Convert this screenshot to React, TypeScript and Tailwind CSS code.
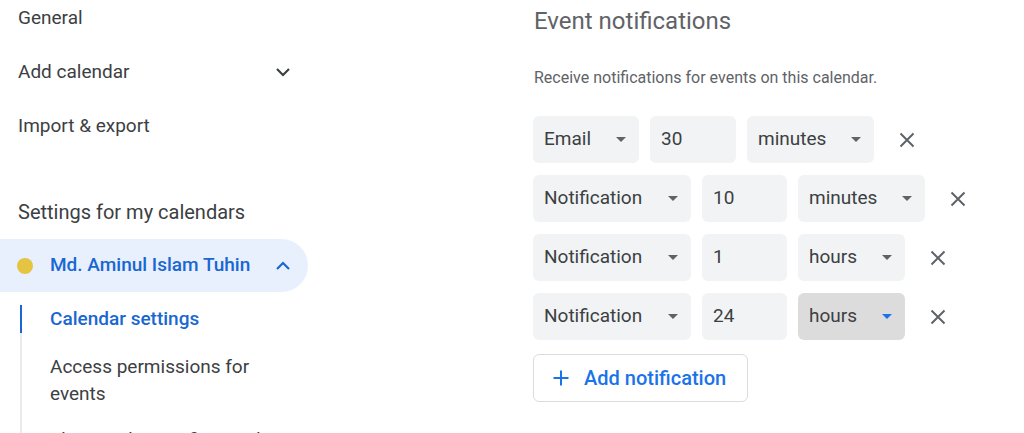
import React from "react";

const Caret = ({ active = false }: { active?: boolean }) => (
  <svg width="10" height="5" viewBox="0 0 10 5" className="shrink-0">
    <path d="M0 0 L10 0 L5 5 Z" fill={active ? "#1a73e8" : "#5f6368"} />
  </svg>
);

const XIcon = () => (
  <svg width="16" height="16" viewBox="0 0 16 16">
    <path d="M1.5 1.5 L14.5 14.5 M14.5 1.5 L1.5 14.5" stroke="#5f6368" strokeWidth="2" fill="none" />
  </svg>
);

const Select = ({ label, width, active = false }: { label: string; width: string; active?: boolean }) => (
  <div
    className={`${width} ${active ? "bg-[#dcdcdd]" : "bg-[#f1f3f4]"} h-[47px] rounded-[6px] flex items-center justify-between pl-[11px] pr-[13px] text-[19px] text-[#3c4043]`}
  >
    <span>{label}</span>
    <Caret active={active} />
  </div>
);

const NumBox = ({ value, width }: { value: string; width: string }) => (
  <div className={`${width} bg-[#f1f3f4] h-[47px] rounded-[6px] flex items-center pl-[11px] text-[19px] text-[#3c4043]`}>
    {value}
  </div>
);

const Row = ({
  type,
  typeW,
  num,
  numW,
  unit,
  unitW,
  active = false,
}: {
  type: string;
  typeW: string;
  num: string;
  numW: string;
  unit: string;
  unitW: string;
  active?: boolean;
}) => (
  <div className="flex items-center gap-[11px] shrink-0">
    <Select label={type} width={typeW} />
    <NumBox value={num} width={numW} />
    <Select label={unit} width={unitW} active={active} />
    <div className="w-[44px] h-[44px] flex items-center justify-center">
      <XIcon />
    </div>
  </div>
);

export default function App() {
  return (
    <div
      className="w-[1024px] h-[433px] overflow-hidden bg-white flex"
      style={{ fontFamily: "Roboto, 'Noto Sans', sans-serif" }}
    >
      {/* Left navigation */}
      <div className="w-[533px] shrink-0 flex flex-col text-[19px] text-[#3c4043]">
        <div className="shrink-0 h-[36px] flex items-center pl-[18px]">General</div>
        <div className="shrink-0 mt-[9px] h-[54px] flex items-center justify-between pl-[18px] pr-[242px]">
          <span>Add calendar</span>
          <svg width="16" height="10" viewBox="0 0 16 10">
            <path d="M2 2 L8 8 L14 2" stroke="#3c4043" strokeWidth="2.2" fill="none" />
          </svg>
        </div>
        <div className="shrink-0 h-[54px] flex items-center pl-[18px]">Import &amp; export</div>
        <div className="shrink-0 mt-[32px] h-[54px] flex items-center pl-[18px] text-[20px] text-[#3c4043]">
          Settings for my calendars
        </div>
        <div className="shrink-0 w-[308px] h-[53px] bg-[#e8f0fe] rounded-r-full flex items-center pl-[17px] pr-[17px]">
          <div className="w-[16px] h-[16px] rounded-full bg-[#e4c441] shrink-0" />
          <span className="ml-[17px] text-[#1967d2] font-medium flex-1 whitespace-nowrap">Md. Aminul Islam Tuhin</span>
          <svg width="16" height="10" viewBox="0 0 16 10" className="shrink-0">
            <path d="M2 8 L8 2 L14 8" stroke="#1967d2" strokeWidth="2.2" fill="none" />
          </svg>
        </div>
        <div className="shrink-0 ml-[20px] flex flex-col">
          <div className="shrink-0 mt-[13px] h-[28px] flex items-center">
            <div className="w-[2px] h-full bg-[#1967d2]" />
            <span className="ml-[28px] text-[#1967d2] font-medium">Calendar settings</span>
          </div>
          <div className="shrink-0 border-l-2 border-[#e8eaed] pl-[28px] pt-[20px] flex flex-col leading-[27px]">
            <div className="w-[230px]">Access permissions for events</div>
            <div className="mt-[19px] whitespace-nowrap">Share with specific people</div>
          </div>
        </div>
      </div>

      {/* Right content */}
      <div className="flex flex-col">
        <div className="shrink-0 h-[42px] flex items-center text-[24px] text-[#5f6368] pl-[1px]">Event notifications</div>
        <div className="shrink-0 mt-[25px] h-[22px] flex items-center text-[16px] text-[#5f6368] pl-[1px]">
          Receive notifications for events on this calendar.
        </div>
        <div className="shrink-0 mt-[27px] flex flex-col gap-[12px]">
          <Row type="Email" typeW="w-[106px]" num="30" numW="w-[86px]" unit="minutes" unitW="w-[127px]" />
          <Row type="Notification" typeW="w-[158px]" num="10" numW="w-[85px]" unit="minutes" unitW="w-[127px]" />
          <Row type="Notification" typeW="w-[158px]" num="1" numW="w-[85px]" unit="hours" unitW="w-[107px]" />
          <Row type="Notification" typeW="w-[158px]" num="24" numW="w-[85px]" unit="hours" unitW="w-[107px]" active />
        </div>
        <div className="shrink-0 mt-[14px] w-[215px] h-[48px] border border-[#dadce0] rounded-[6px] flex items-center pl-[19px] text-[#1a73e8] text-[20px] font-medium">
          <svg width="16" height="16" viewBox="0 0 16 16">
            <path d="M8 0.5 V15.5 M0.5 8 H15.5" stroke="#1a73e8" strokeWidth="2" fill="none" />
          </svg>
          <span className="ml-[15px] whitespace-nowrap">Add notification</span>
        </div>
      </div>
    </div>
  );
}
